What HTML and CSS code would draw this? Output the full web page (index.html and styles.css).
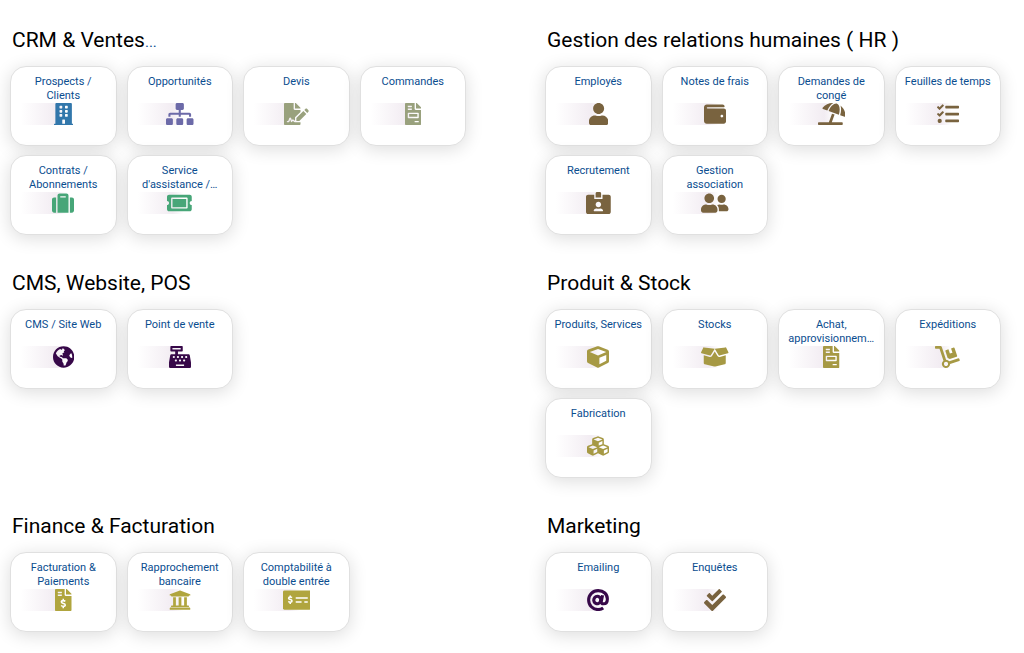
FILE: index.html
```html
<!DOCTYPE html>
<html lang="fr">
  <head>
    <meta charset="utf-8" />
    <meta name="viewport" content="width=device-width, initial-scale=1" />
    <title>Modules</title>
    <link rel="stylesheet" href="styles.css">
  </head>
  <body>
    <!-- icons used more than once -->
    <svg class="sprite" aria-hidden="true">
      <symbol id="file-invoice" viewBox="0 0 384 512">
        <path d="M288 256H96v64h192v-64zm89-151L279.1 7c-4.5-4.5-10.6-7-17-7H256v128h128v-6.1c0-6.3-2.5-12.4-7-16.9zm-153 31V0H24C10.7 0 0 10.7 0 24v464c0 13.3 10.7 24 24 24h336c13.3 0 24-10.7 24-24V160H248c-13.2 0-24-10.8-24-24zM64 72c0-4.42 3.58-8 8-8h80c4.42 0 8 3.58 8 8v16c0 4.42-3.58 8-8 8H72c-4.42 0-8-3.58-8-8V72zm0 64c0-4.42 3.58-8 8-8h80c4.42 0 8 3.58 8 8v16c0 4.42-3.58 8-8 8H72c-4.42 0-8-3.58-8-8v-16zm256 304c0 4.42-3.58 8-8 8h-80c-4.42 0-8-3.58-8-8v-16c0-4.42 3.58-8 8-8h80c4.42 0 8 3.58 8 8v16zm0-200v96c0 8.84-7.16 16-16 16H80c-8.84 0-16-7.16-16-16v-96c0-8.84 7.16-16 16-16h224c8.84 0 16 7.16 16 16z"/>
      </symbol>
    </svg>

    <main class="modules">
      <section>
        <h2>CRM &amp; Ventes<a class="more" href="#">...</a></h2>
        <div class="cards">
          <a class="card" href="#">
            <span class="label">Prospects / Clients</span>
            <span class="icon blue"><svg viewBox="0 0 448 512"><path d="M436 480h-20V24c0-13.255-10.745-24-24-24H56C42.745 0 32 10.745 32 24v456H12c-6.627 0-12 5.373-12 12v20h448v-20c0-6.627-5.373-12-12-12zM128 76c0-6.627 5.373-12 12-12h40c6.627 0 12 5.373 12 12v40c0 6.627-5.373 12-12 12h-40c-6.627 0-12-5.373-12-12V76zm0 96c0-6.627 5.373-12 12-12h40c6.627 0 12 5.373 12 12v40c0 6.627-5.373 12-12 12h-40c-6.627 0-12-5.373-12-12v-40zm52 148h-40c-6.627 0-12-5.373-12-12v-40c0-6.627 5.373-12 12-12h40c6.627 0 12 5.373 12 12v40c0 6.627-5.373 12-12 12zm76 160h-64v-84c0-6.627 5.373-12 12-12h40c6.627 0 12 5.373 12 12v84zm64-172c0 6.627-5.373 12-12 12h-40c-6.627 0-12-5.373-12-12v-40c0-6.627 5.373-12 12-12h40c6.627 0 12 5.373 12 12v40zm0-96c0 6.627-5.373 12-12 12h-40c-6.627 0-12-5.373-12-12v-40c0-6.627 5.373-12 12-12h40c6.627 0 12 5.373 12 12v40zm0-96c0 6.627-5.373 12-12 12h-40c-6.627 0-12-5.373-12-12V76c0-6.627 5.373-12 12-12h40c6.627 0 12 5.373 12 12v40z"/></svg></span>
          </a>
          <a class="card" href="#">
            <span class="label">Opportunités</span>
            <span class="icon violet"><svg viewBox="0 0 640 512"><path d="M128 352H32c-17.67 0-32 14.33-32 32v96c0 17.67 14.33 32 32 32h96c17.67 0 32-14.33 32-32v-96c0-17.67-14.33-32-32-32zm-24-80h192v48h48v-48h192v48h48v-57.59c0-21.17-17.23-38.41-38.41-38.41H344v-64h40c17.67 0 32-14.33 32-32V32c0-17.67-14.33-32-32-32H256c-17.67 0-32 14.33-32 32v96c0 17.67 14.33 32 32 32h40v64H94.41C73.23 224 56 241.23 56 262.41V320h48v-48zm264 80h-96c-17.67 0-32 14.33-32 32v96c0 17.67 14.33 32 32 32h96c17.67 0 32-14.33 32-32v-96c0-17.67-14.33-32-32-32zm240 0h-96c-17.67 0-32 14.33-32 32v96c0 17.67 14.33 32 32 32h96c17.67 0 32-14.33 32-32v-96c0-17.67-14.33-32-32-32z"/></svg></span>
          </a>
          <a class="card" href="#">
            <span class="label">Devis</span>
            <span class="icon sage"><svg viewBox="0 0 576 512"><path d="M218.17 424.14c-2.95-5.92-8.09-6.52-10.17-6.52s-7.22.59-10.02 6.19l-7.67 15.34c-6.37 12.78-25.03 11.37-29.48-2.09L144 386.59l-10.61 31.88c-5.89 17.66-22.38 29.53-41 29.53H80c-8.84 0-16-7.16-16-16s7.16-16 16-16h12.39c4.83 0 9.11-3.08 10.64-7.66l18.19-54.64c3.3-9.81 12.44-16.41 22.78-16.41s19.48 6.59 22.77 16.41l13.88 41.64c19.75-16.19 54.06-9.7 66 14.16 1.89 3.78 5.49 5.95 9.36 6.26v-82.12l128-127.09V160H248c-13.2 0-24-10.8-24-24V0H24C10.7 0 0 10.7 0 24v464c0 13.3 10.7 24 24 24h336c13.3 0 24-10.7 24-24v-40l-128-.11c-16.12-.31-30.58-9.28-37.83-23.75zM384 121.9c0-6.3-2.5-12.4-7-16.9L279.1 7c-4.5-4.5-10.6-7-17-7H256v128h128v-6.1zm-96 225.06V416h68.99l161.68-162.78-67.88-67.88L288 346.96zm280.54-179.63l-31.87-31.87c-9.94-9.94-26.07-9.94-36.01 0l-27.25 27.25 67.88 67.88 27.25-27.25c9.95-9.94 9.95-26.07 0-36.01z"/></svg></span>
          </a>
          <a class="card" href="#">
            <span class="label">Commandes</span>
            <span class="icon sage"><svg viewBox="0 0 384 512"><use href="#file-invoice"/></svg></span>
          </a>
          <a class="card" href="#">
            <span class="label">Contrats / Abonnements</span>
            <span class="icon green"><svg viewBox="0 0 512 512"><path d="M128 480h256V80c0-26.5-21.5-48-48-48H176c-26.5 0-48 21.5-48 48v400zm64-384h128v32H192V96zm320 80v256c0 26.5-21.5 48-48 48h-48V128h48c26.5 0 48 21.5 48 48zM96 480H48c-26.5 0-48-21.5-48-48V176c0-26.5 21.5-48 48-48h48v352z"/></svg></span>
          </a>
          <a class="card" href="#">
            <span class="label">Service d'assistance /…</span>
            <span class="icon green"><svg viewBox="0 0 576 512"><path d="M128 160h320v192H128V160zm400 96c0 26.51 21.49 48 48 48v96c0 26.51-21.49 48-48 48H48c-26.51 0-48-21.49-48-48v-96c26.51 0 48-21.49 48-48s-21.49-48-48-48v-96c0-26.51 21.49-48 48-48h480c26.51 0 48 21.49 48 48v96c-26.51 0-48 21.49-48 48zm-48-104c0-13.255-10.745-24-24-24H120c-13.255 0-24 10.745-24 24v208c0 13.255 10.745 24 24 24h336c13.255 0 24-10.745 24-24V152z"/></svg></span>
          </a>
        </div>
      </section>

      <section>
        <h2>Gestion des relations humaines ( HR )</h2>
        <div class="cards">
          <a class="card" href="#">
            <span class="label">Employés</span>
            <span class="icon brown"><svg viewBox="0 0 448 512"><path d="M224 256c70.7 0 128-57.3 128-128S294.7 0 224 0 96 57.3 96 128s57.3 128 128 128zm89.6 32h-16.7c-22.2 10.2-46.9 16-72.9 16s-50.6-5.8-72.9-16h-16.7C60.2 288 0 348.2 0 422.4V464c0 26.5 21.5 48 48 48h352c26.5 0 48-21.5 48-48v-41.6c0-74.2-60.2-134.4-134.4-134.4z"/></svg></span>
          </a>
          <a class="card" href="#">
            <span class="label">Notes de frais</span>
            <span class="icon brown"><svg viewBox="0 0 512 512"><path d="M461.2 128H80c-8.84 0-16-7.16-16-16s7.16-16 16-16h384c8.84 0 16-7.16 16-16 0-26.51-21.49-48-48-48H64C28.65 32 0 60.65 0 96v320c0 35.35 28.65 64 64 64h397.2c28.02 0 50.8-21.53 50.8-48V176c0-26.47-22.78-48-50.8-48zM416 336c-17.67 0-32-14.33-32-32s14.33-32 32-32 32 14.33 32 32-14.33 32-32 32z"/></svg></span>
          </a>
          <a class="card" href="#">
            <span class="label">Demandes de congé</span>
            <span class="icon brown"><svg viewBox="0 0 640 512"><path d="M115.38 136.9l102.11 37.18c35.19-81.54 86.21-144.29 139-173.7-95.88-4.89-188.78 36.96-248.53 111.8-6.69 8.4-2.66 21.05 7.42 24.72zm132.25 48.16l238.48 86.83c35.76-121.38 18.7-231.66-42.63-253.98-7.4-2.7-15.13-4-23.09-4-58.02.01-128.27 69.17-172.76 171.15zM521.48 60.5c6.22 16.3 10.83 34.6 13.2 55.19 5.74 49.89-1.42 108.23-18.95 166.98l102.62 37.36c10.09 3.67 21.31-3.43 21.57-14.17 2.32-95.69-41.91-187.44-118.44-245.36zM560 447.98H321.06L386 269.5l-60.14-21.9-72.9 200.37H16c-8.84 0-16 7.16-16 16.01v32.01C0 504.83 7.16 512 16 512h544c8.84 0 16-7.17 16-16.01v-32.01c0-8.84-7.16-16-16-16z"/></svg></span>
          </a>
          <a class="card" href="#">
            <span class="label">Feuilles de temps</span>
            <span class="icon brown"><svg viewBox="0 0 512 512"><path d="M139.61 35.5a12 12 0 0 0-17 0L58.93 98.81l-22.7-22.12a12 12 0 0 0-17 0L3.53 92.41a12 12 0 0 0 0 17l47.59 47.4a12.78 12.78 0 0 0 17.61 0l15.59-15.62L156.52 69a12.09 12.09 0 0 0 .09-17zm0 159.19a12 12 0 0 0-17 0l-63.68 63.72-22.7-22.1a12 12 0 0 0-17 0L3.53 252a12 12 0 0 0 0 17L51 316.5a12.77 12.77 0 0 0 17.6 0l15.7-15.69 72.2-72.22a12 12 0 0 0 .09-16.9zM64 368c-26.49 0-48.59 21.5-48.59 48S37.53 464 64 464a48 48 0 0 0 0-96zm432 16H208a16 16 0 0 0-16 16v32a16 16 0 0 0 16 16h288a16 16 0 0 0 16-16v-32a16 16 0 0 0-16-16zm0-320H208a16 16 0 0 0-16 16v32a16 16 0 0 0 16 16h288a16 16 0 0 0 16-16V80a16 16 0 0 0-16-16zm0 160H208a16 16 0 0 0-16 16v32a16 16 0 0 0 16 16h288a16 16 0 0 0 16-16v-32a16 16 0 0 0-16-16z"/></svg></span>
          </a>
          <a class="card" href="#">
            <span class="label">Recrutement</span>
            <span class="icon brown"><svg viewBox="0 0 576 512"><path d="M528 64H384v96H192V64H48C21.5 64 0 85.5 0 112v352c0 26.5 21.5 48 48 48h480c26.5 0 48-21.5 48-48V112c0-26.5-21.5-48-48-48zM288 224c35.3 0 64 28.7 64 64s-28.7 64-64 64-64-28.7-64-64 28.7-64 64-64zm93.3 224H194.7c-10.4 0-18.8-10-15.6-19.8 8.3-25.6 32.4-44.2 60.9-44.2h8.2c12.3 5.1 25.7 8 39.8 8s27.6-2.9 39.8-8h8.2c28.4 0 52.5 18.5 60.9 44.2 3.2 9.9-5.2 19.8-15.6 19.8zM352 32c0-17.7-14.3-32-32-32h-64c-17.7 0-32 14.3-32 32v96h128V32z"/></svg></span>
          </a>
          <a class="card" href="#">
            <span class="label">Gestion association</span>
            <span class="icon brown"><svg viewBox="0 0 640 512"><path d="M192 256c61.9 0 112-50.1 112-112S253.9 32 192 32 80 82.1 80 144s50.1 112 112 112zm76.8 32h-8.3c-20.8 10-43.9 16-68.5 16s-47.6-6-68.5-16h-8.3C51.6 288 0 339.6 0 403.2V432c0 26.5 21.5 48 48 48h288c26.5 0 48-21.5 48-48v-28.8c0-63.6-51.6-115.2-115.2-115.2zM480 256c53 0 96-43 96-96s-43-96-96-96-96 43-96 96 43 96 96 96zm48 32h-3.8c-13.9 4.8-28.6 8-44.2 8s-30.3-3.2-44.2-8H432c-20.4 0-39.2 5.9-55.7 15.4 24.4 26.3 39.7 61.2 39.7 99.8v38.4c0 2.2-.5 4.3-.6 6.4H592c26.5 0 48-21.5 48-48 0-61.9-50.1-112-112-112z"/></svg></span>
          </a>
        </div>
      </section>

      <section>
        <h2>CMS, Website, POS</h2>
        <div class="cards">
          <a class="card" href="#">
            <span class="label">CMS / Site Web</span>
            <span class="icon purple"><svg viewBox="0 0 496 512"><path d="M248 8C111.03 8 0 119.03 0 256s111.03 248 248 248 248-111.03 248-248S384.97 8 248 8zm82.29 357.6c-3.9 3.88-7.99 7.95-11.31 11.28-2.99 3-5.1 6.7-6.17 10.71-1.51 5.66-2.73 11.38-4.77 16.87l-17.39 46.85c-13.76 3-28 4.69-42.65 4.69v-27.38c1.69-12.62-7.64-36.26-22.63-51.25-6-6-9.37-14.14-9.37-22.63v-32.01c0-11.64-6.27-22.34-16.46-27.97-14.37-7.95-34.81-19.06-48.81-26.11-11.48-5.78-22.1-13.14-31.65-21.75l-.8-.72a114.792 114.792 0 0 1-18.06-20.74c-9.38-13.77-24.66-36.42-34.59-51.14 20.47-45.5 57.36-82.04 103.2-101.89l24.01 12.01C203.48 89.74 216 82.01 216 70.11v-11.3c7.99-1.29 16.12-2.11 24.39-2.42l28.3 28.3c6.25 6.25 6.25 16.38 0 22.63L264 112l-10.34 10.34c-3.12 3.12-3.12 8.19 0 11.31l4.69 4.69c3.12 3.12 3.12 8.19 0 11.31l-8 8a8.008 8.008 0 0 1-5.66 2.34h-8.99c-2.08 0-4.08.81-5.58 2.27l-9.92 9.65a8.008 8.008 0 0 0-1.58 9.31l15.59 31.19c2.66 5.32-1.21 11.58-7.15 11.58h-5.64c-1.93 0-3.79-.7-5.24-1.96l-9.28-8.06a16.017 16.017 0 0 0-15.55-3.1l-31.17 10.39a11.95 11.95 0 0 0-8.17 11.34c0 4.53 2.56 8.66 6.61 10.69l11.08 5.54c9.41 4.71 19.79 7.16 30.31 7.16s22.59 27.29 32 32h66.75c8.49 0 16.62 3.37 22.63 9.37l13.69 13.69a30.503 30.503 0 0 1 8.93 21.57 46.536 46.536 0 0 1-13.72 32.98zM417 274.25c-5.79-1.45-10.84-5-14.15-9.97l-17.98-26.97a23.97 23.97 0 0 1 0-26.62l19.59-29.38c2.32-3.47 5.5-6.29 9.24-8.15l12.98-6.49C440.2 193.59 448 223.87 448 256c0 8.67-.74 17.16-1.82 25.54L417 274.25z"/></svg></span>
          </a>
          <a class="card" href="#">
            <span class="label">Point de vente</span>
            <span class="icon purple"><svg viewBox="0 0 512 512"><path d="M511.1 378.8l-26.7-160c-2.6-15.4-15.9-26.7-31.6-26.7H208v-64h96c8.8 0 16-7.2 16-16V16c0-8.8-7.2-16-16-16H48c-8.8 0-16 7.2-16 16v96c0 8.8 7.2 16 16 16h96v64H59.1c-15.6 0-29 11.3-31.6 26.7L.8 378.7c-.6 3.5-.9 7-.9 10.5V480c0 17.7 14.3 32 32 32h448c17.7 0 32-14.3 32-32v-90.7c.1-3.5-.2-7-.8-10.5zM280 248c0-8.8 7.2-16 16-16h16c8.8 0 16 7.2 16 16v16c0 8.8-7.2 16-16 16h-16c-8.8 0-16-7.2-16-16v-16zm-32 64h16c8.8 0 16 7.2 16 16v16c0 8.8-7.2 16-16 16h-16c-8.8 0-16-7.2-16-16v-16c0-8.8 7.2-16 16-16zm-32-80c8.8 0 16 7.2 16 16v16c0 8.8-7.2 16-16 16h-16c-8.8 0-16-7.2-16-16v-16c0-8.8 7.2-16 16-16h16zM80 80V48h192v32H80zm40 200h-16c-8.8 0-16-7.2-16-16v-16c0-8.8 7.2-16 16-16h16c8.8 0 16 7.2 16 16v16c0 8.8-7.2 16-16 16zm16 64v-16c0-8.8 7.2-16 16-16h16c8.8 0 16 7.2 16 16v16c0 8.8-7.2 16-16 16h-16c-8.8 0-16-7.2-16-16zm216 112c0 4.4-3.6 8-8 8H168c-4.4 0-8-3.6-8-8v-16c0-4.4 3.6-8 8-8h176c4.4 0 8 3.6 8 8v16zm24-112c0 8.8-7.2 16-16 16h-16c-8.8 0-16-7.2-16-16v-16c0-8.8 7.2-16 16-16h16c8.8 0 16 7.2 16 16v16zm48-80c0 8.8-7.2 16-16 16h-16c-8.8 0-16-7.2-16-16v-16c0-8.8 7.2-16 16-16h16c8.8 0 16 7.2 16 16v16z"/></svg></span>
          </a>
        </div>
      </section>

      <section>
        <h2>Produit &amp; Stock</h2>
        <div class="cards">
          <a class="card" href="#">
            <span class="label">Produits, Services</span>
            <span class="icon olive"><svg viewBox="0 0 512 512"><path d="M239.1 6.3l-208 78c-18.7 7-31.1 25-31.1 45v225.1c0 18.2 10.3 34.8 26.5 42.9l208 104c13.5 6.8 29.4 6.8 42.9 0l208-104c16.3-8.1 26.5-24.8 26.5-42.9V129.3c0-20-12.4-37.9-31.1-44.9l-208-78C262 2.2 250 2.2 239.1 6.3zM256 68.4l192 72v1.1l-192 78-192-78v-1.1l192-72zm32 356V275.5l160-65v133.9l-160 80z"/></svg></span>
          </a>
          <a class="card" href="#">
            <span class="label">Stocks</span>
            <span class="icon olive"><svg viewBox="0 0 640 512"><path d="M425.7 256c-16.9 0-32.8-9-41.4-23.4L320 126l-64.2 106.6c-8.7 14.5-24.6 23.5-41.5 23.5-4.5 0-9-.6-13.3-1.9L64 215v178c0 14.7 10 27.5 24.2 31l216.2 54.1c10.2 2.5 20.9 2.5 31 0L551.8 424c14.2-3.6 24.2-16.4 24.2-31V215l-137 39.1c-4.3 1.3-8.8 1.9-13.3 1.9zm212.6-112.2L586.8 41c-3.1-6.2-9.8-9.8-16.7-8.9L320 64l91.7 152.1c3.8 6.3 11.4 9.3 18.5 7.3l197.9-56.5c9.9-2.9 14.7-13.9 10.2-23.1zM53.2 41L1.7 143.8c-4.6 9.2.3 20.2 10.1 23l197.9 56.5c7.1 2 14.7-1 18.5-7.3L320 64 69.8 32.1c-6.9-.8-13.5 2.7-16.6 8.9z"/></svg></span>
          </a>
          <a class="card" href="#">
            <span class="label">Achat, approvisionnem…</span>
            <span class="icon olive"><svg viewBox="0 0 384 512"><use href="#file-invoice"/></svg></span>
          </a>
          <a class="card" href="#">
            <span class="label">Expéditions</span>
            <span class="icon olive"><svg viewBox="0 0 576 512"><path d="M294.2 277.7c18 5 34.7 13.4 49.5 24.7l161.5-53.8c8.4-2.8 12.9-11.9 10.1-20.2L454.9 47.2c-2.8-8.4-11.9-12.9-20.2-10.1l-61.1 20.4 33.1 99.4L346 177l-33.1-99.4-61.6 20.5c-8.4 2.8-12.9 11.9-10.1 20.2l53 159.4zm281 48.7L565 296c-2.8-8.4-11.9-12.9-20.2-10.1l-213.5 71.2c-17.2-22-43.6-36.4-73.5-37L158.4 21.9C154 8.8 141.8 0 128 0H16C7.2 0 0 7.2 0 16v32c0 8.8 7.2 16 16 16h88.9l92.2 276.7c-26.1 20.4-41.7 53.6-36 90.5 6.1 39.4 37.9 72.3 77.3 79.2 60.2 10.7 112.3-34.8 113.4-92.6l213.3-71.2c8.3-2.8 12.9-11.8 10.1-20.2zM256 464c-26.5 0-48-21.5-48-48s21.5-48 48-48 48 21.5 48 48-21.5 48-48 48z"/></svg></span>
          </a>
          <a class="card" href="#">
            <span class="label">Fabrication</span>
            <span class="icon olive"><svg viewBox="0 0 512 512"><path d="M488.6 250.2L392 214V105.5c0-15-9.3-28.4-23.4-33.7l-100-37.5c-8.1-3.1-17.1-3.1-25.3 0l-100 37.5c-14.1 5.3-23.4 18.7-23.4 33.7V214l-96.6 36.2C9.3 255.5 0 268.9 0 283.9V394c0 13.6 7.7 26.1 19.9 32.2l100 50c10.1 5.1 22.1 5.1 32.2 0l103.9-52 103.9 52c10.1 5.1 22.1 5.1 32.2 0l100-50c12.2-6.1 19.9-18.6 19.9-32.2V283.9c0-15-9.3-28.4-23.4-33.7zM358 214.8l-85 31.9v-68.2l85-37v73.3zM154 104.1l102-38.2 102 38.2v.6l-102 41.4-102-41.4v-.6zm84 291.1l-85 42.5v-79.1l85-38.8v75.4zm0-112l-102 41.4-102-41.4v-.6l102-38.2 102 38.2v.6zm240 112l-85 42.5v-79.1l85-38.8v75.4zm0-112l-102 41.4-102-41.4v-.6l102-38.2 102 38.2v.6z"/></svg></span>
          </a>
        </div>
      </section>

      <section>
        <h2>Finance &amp; Facturation</h2>
        <div class="cards">
          <a class="card" href="#">
            <span class="label">Facturation &amp; Paiements</span>
            <span class="icon mustard"><svg viewBox="0 0 384 512">
              <path d="M377 105L279.1 7c-4.5-4.5-10.6-7-17-7H256v128h128v-6.1c0-6.3-2.5-12.4-7-16.9zm-153 31V0H24C10.7 0 0 10.7 0 24v464c0 13.3 10.7 24 24 24h336c13.3 0 24-10.7 24-24V160H248c-13.2 0-24-10.8-24-24zM64 72c0-4.42 3.58-8 8-8h80c4.42 0 8 3.58 8 8v16c0 4.42-3.58 8-8 8H72c-4.42 0-8-3.58-8-8V72zm0 80v-16c0-4.42 3.58-8 8-8h80c4.42 0 8 3.58 8 8v16c0 4.42-3.58 8-8 8H72c-4.42 0-8-3.58-8-8z"/>
              <path class="cut" d="M192 226v38M192 408v38M240 286c-14-12-28-16-48-16-28 0-44 12-44 32 0 46 90 22 90 68 0 20-18 32-46 32-20 0-36-6-50-18"/>
            </svg></span>
          </a>
          <a class="card" href="#">
            <span class="label">Rapprochement bancaire</span>
            <span class="icon mustard"><svg viewBox="0 0 512 512"><path d="M496 128v16a8 8 0 0 1-8 8h-24v12c0 6.627-5.373 12-12 12H60c-6.627 0-12-5.373-12-12v-12H24a8 8 0 0 1-8-8v-16a8 8 0 0 1 4.941-7.392l232-88a7.996 7.996 0 0 1 6.118 0l232 88A8 8 0 0 1 496 128zm-24 304H40c-13.255 0-24 10.745-24 24v16a8 8 0 0 0 8 8h464a8 8 0 0 0 8-8v-16c0-13.255-10.745-24-24-24zM96 192v192H60c-6.627 0-12 5.373-12 12v20h416v-20c0-6.627-5.373-12-12-12h-36V192h-64v192h-64V192h-64v192h-64V192H96z"/></svg></span>
          </a>
          <a class="card" href="#">
            <span class="label">Comptabilité à double entrée</span>
            <span class="icon mustard"><svg viewBox="0 0 640 512">
              <rect y="32" width="640" height="448" rx="32"/>
              <path class="cut" d="M168 152v32M168 316v32M210 202c-12-10-24-14-42-14-24 0-38 10-38 28 0 40 80 22 80 62 0 18-16 28-42 28-18 0-32-6-44-16M296 208h280M296 304h136M496 304h80"/>
            </svg></span>
          </a>
        </div>
      </section>

      <section>
        <h2>Marketing</h2>
        <div class="cards">
          <a class="card" href="#">
            <span class="label">Emailing</span>
            <span class="icon purple"><svg viewBox="0 0 512 512">
              <path class="line" d="M377 440c-34 24-76 38-121 38C134 478 38 380 38 256S134 38 260 38c128 0 214 82 214 192 0 74-38 114-90 114-40 0-58-20-50-60l28-138"/>
              <ellipse class="line" cx="238" cy="256" rx="80" ry="86" transform="rotate(20 238 256)"/>
            </svg></span>
          </a>
          <a class="card" href="#">
            <span class="label">Enquêtes</span>
            <span class="icon brown"><svg viewBox="0 0 512 512"><path d="M505 174.8l-39.6-39.6c-9.4-9.4-24.6-9.4-33.9 0L192 374.7 80.6 263.2c-9.4-9.4-24.6-9.4-33.9 0L7 302.9c-9.4 9.4-9.4 24.6 0 34L175 505c9.4 9.4 24.6 9.4 33.9 0l296-296.2c9.4-9.5 9.4-24.7.1-34zm-324.3 106c6.2 6.3 16.4 6.3 22.6 0l208-208.2c6.2-6.3 6.2-16.4 0-22.6L366.1 4.7c-6.2-6.3-16.4-6.3-22.6 0L192 156.2l-55.4-55.5c-6.2-6.3-16.4-6.3-22.6 0L68.7 146c-6.2 6.3-6.2 16.4 0 22.6l112 112.2z"/></svg></span>
          </a>
        </div>
      </section>
    </main>
  </body>
</html>
```
FILE: styles.css
```css
body {
  margin: 0;
  background-color: #fff;
  font-family: Roboto, sans-serif;
}
a {
  color: #0a4d8f;
  text-decoration: none;
}
.sprite {
  display: none;
}
.modules {
  display: grid;
  grid-template-columns: minmax(0, 1fr) minmax(0, 1fr);
  gap: 34px 79px;
  padding: 26px 23px 20px 10px;
}
h2 {
  margin: 0 0 12px;
  padding-left: 2px;
  font-size: 21px;
  font-weight: 400;
  line-height: 28px;
  color: #000;
}
.more {
  font-size: 15px;
  line-height: 1;
}
.cards {
  display: grid;
  grid-template-columns: repeat(4, minmax(0, 1fr));
  gap: 9px 10px;
}
.card {
  box-sizing: border-box;
  height: 80px;
  padding: 8px 7px;
  border: 1px solid #e0e0e0;
  border-radius: 16px;
  background-color: #fff;
  box-shadow: 0 3px 18px rgba(0, 0, 0, 0.14);
  font-size: 11px;
  line-height: 14px;
  text-align: center;
}
.label {
  display: block;
  height: 28px;
}
.icon {
  display: flex;
  justify-content: center;
  height: 22px;
  background: linear-gradient(to right, #fff 3%, #f2ecf2 42%, #fff 54%);
}
.icon svg {
  height: 22px;
  fill: currentColor;
}
.icon .cut {
  fill: none;
  stroke: #fff;
  stroke-width: 36;
}
.icon .line {
  fill: none;
  stroke: currentColor;
  stroke-width: 72;
}

.blue {
  color: #3277ab;
}
.violet {
  color: #6c6aa8;
}
.sage {
  color: #99a17d;
}
.green {
  color: #47a678;
}
.brown {
  color: #79633f;
}
.purple {
  color: #370849;
}
.olive {
  color: #a69944;
}
.mustard {
  color: #b0a53e;
}

@media screen and (max-width: 900px) {
  .modules {
    grid-template-columns: minmax(0, 1fr);
  }
}
```
